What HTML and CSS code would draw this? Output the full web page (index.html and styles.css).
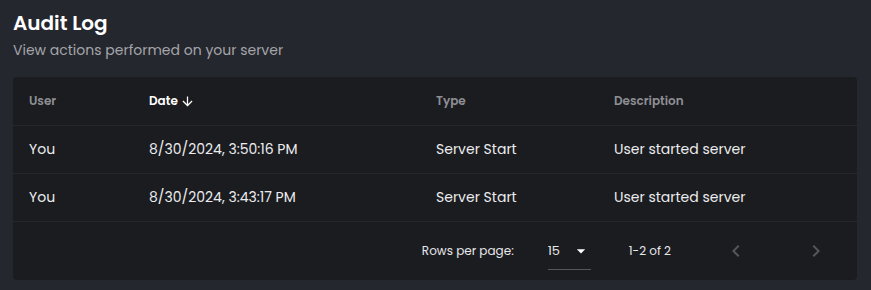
FILE: index.html
```html
<!DOCTYPE html>
<html lang="en">

<head>
    <meta charset="UTF-8">
    <meta name="viewport" content="width=device-width, initial-scale=1.0">
    <title>Audit Log</title>
    <link rel="stylesheet" href="styles.css">
</head>

<body>
    <div class="page">
        <h1 class="title">Audit Log</h1>
        <p class="subtitle">View actions performed on your server</p>

        <div class="card">
            <table class="log-table">
                <thead>
                    <tr>
                        <th class="col-user">User</th>
                        <th class="col-date active">
                            <span class="sort">Date
                                <svg class="sort-icon" width="15" height="15" viewBox="0 0 24 24">
                                    <path d="M20 12l-1.41-1.41L13 16.17V4h-2v12.17l-5.58-5.59L4 12l8 8 8-8z" fill="currentColor"/>
                                </svg>
                            </span>
                        </th>
                        <th class="col-type">Type</th>
                        <th class="col-desc">Description</th>
                    </tr>
                </thead>
                <tbody>
                    <tr>
                        <td>You</td>
                        <td>8/30/2024, 3:50:16 PM</td>
                        <td>Server Start</td>
                        <td>User started server</td>
                    </tr>
                    <tr>
                        <td>You</td>
                        <td>8/30/2024, 3:43:17 PM</td>
                        <td>Server Start</td>
                        <td>User started server</td>
                    </tr>
                </tbody>
            </table>

            <div class="pagination">
                <span class="rows-label">Rows per page:</span>
                <div class="rows-select">
                    <span>15</span>
                    <svg width="20" height="20" viewBox="0 0 24 24">
                        <path d="M7 10l5 5 5-5z" fill="currentColor"/>
                    </svg>
                </div>
                <span class="displayed">1-2 of 2</span>
                <div class="page-actions">
                    <button class="page-btn" disabled aria-label="Previous page">
                        <svg width="24" height="24" viewBox="0 0 24 24">
                            <path d="M15.41 7.41L14 6l-6 6 6 6 1.41-1.41L10.83 12z" fill="currentColor"/>
                        </svg>
                    </button>
                    <button class="page-btn" disabled aria-label="Next page">
                        <svg width="24" height="24" viewBox="0 0 24 24">
                            <path d="M10 6L8.59 7.41 13.17 12l-4.58 4.59L10 18l6-6z" fill="currentColor"/>
                        </svg>
                    </button>
                </div>
            </div>
        </div>
    </div>
</body>

</html>
```

FILE: styles.css
```css
body {
    margin: 0;
    background-color: #25272e;
    font-family: "Poppins", "Inter", "Open Sans", sans-serif;
    color: #e8e8ea;
}

.page {
    padding: 9px 14px 10px 13px;
}

.title {
    margin: 0;
    font-size: 20px;
    font-weight: 600;
    line-height: 28px;
    color: #ffffff;
}

.subtitle {
    margin: 2px 0 0;
    font-size: 14px;
    line-height: 22px;
    color: #a4a5aa;
}

.card {
    margin-top: 16px;
    background-color: #1b1c20;
    border-radius: 4px;
    overflow: hidden;
}

.log-table {
    width: 100%;
    border-collapse: collapse;
    table-layout: fixed;
}

.log-table th,
.log-table td {
    text-align: left;
    padding: 0 16px;
    border-bottom: 1px solid #27282d;
}

.log-table th {
    height: 48px;
    font-size: 12px;
    font-weight: 600;
    color: #8e8f94;
}

.log-table td {
    height: 47px;
    font-size: 14px;
    color: #ececee;
}

.col-user {
    width: 88px;
}

.col-date {
    width: 255px;
}

.col-type {
    width: 146px;
}

.log-table th.active {
    color: #ffffff;
}

.sort {
    display: inline-flex;
    align-items: center;
    gap: 2px;
}

.pagination {
    display: flex;
    align-items: center;
    justify-content: flex-end;
    height: 58px;
    padding-right: 21px;
    font-size: 12px;
    color: #e8e8ea;
}

.rows-select {
    display: flex;
    align-items: center;
    justify-content: space-between;
    width: 43px;
    height: 30px;
    margin: 8px 38px 0 34px;
    padding-bottom: 4px;
    box-sizing: border-box;
    border-bottom: 1px solid #55565b;
    font-size: 13px;
}

.rows-select span {
    margin-top: -4px;
}

.rows-select svg {
    margin-top: -4px;
    color: #ffffff;
}

.page-actions {
    display: flex;
    margin-left: 45px;
}

.page-btn {
    display: flex;
    align-items: center;
    justify-content: center;
    width: 40px;
    height: 40px;
    padding: 0;
    border: none;
    background: none;
    color: #55565c;
}

.page-btn + .page-btn {
    margin-left: 40px;
}
```
